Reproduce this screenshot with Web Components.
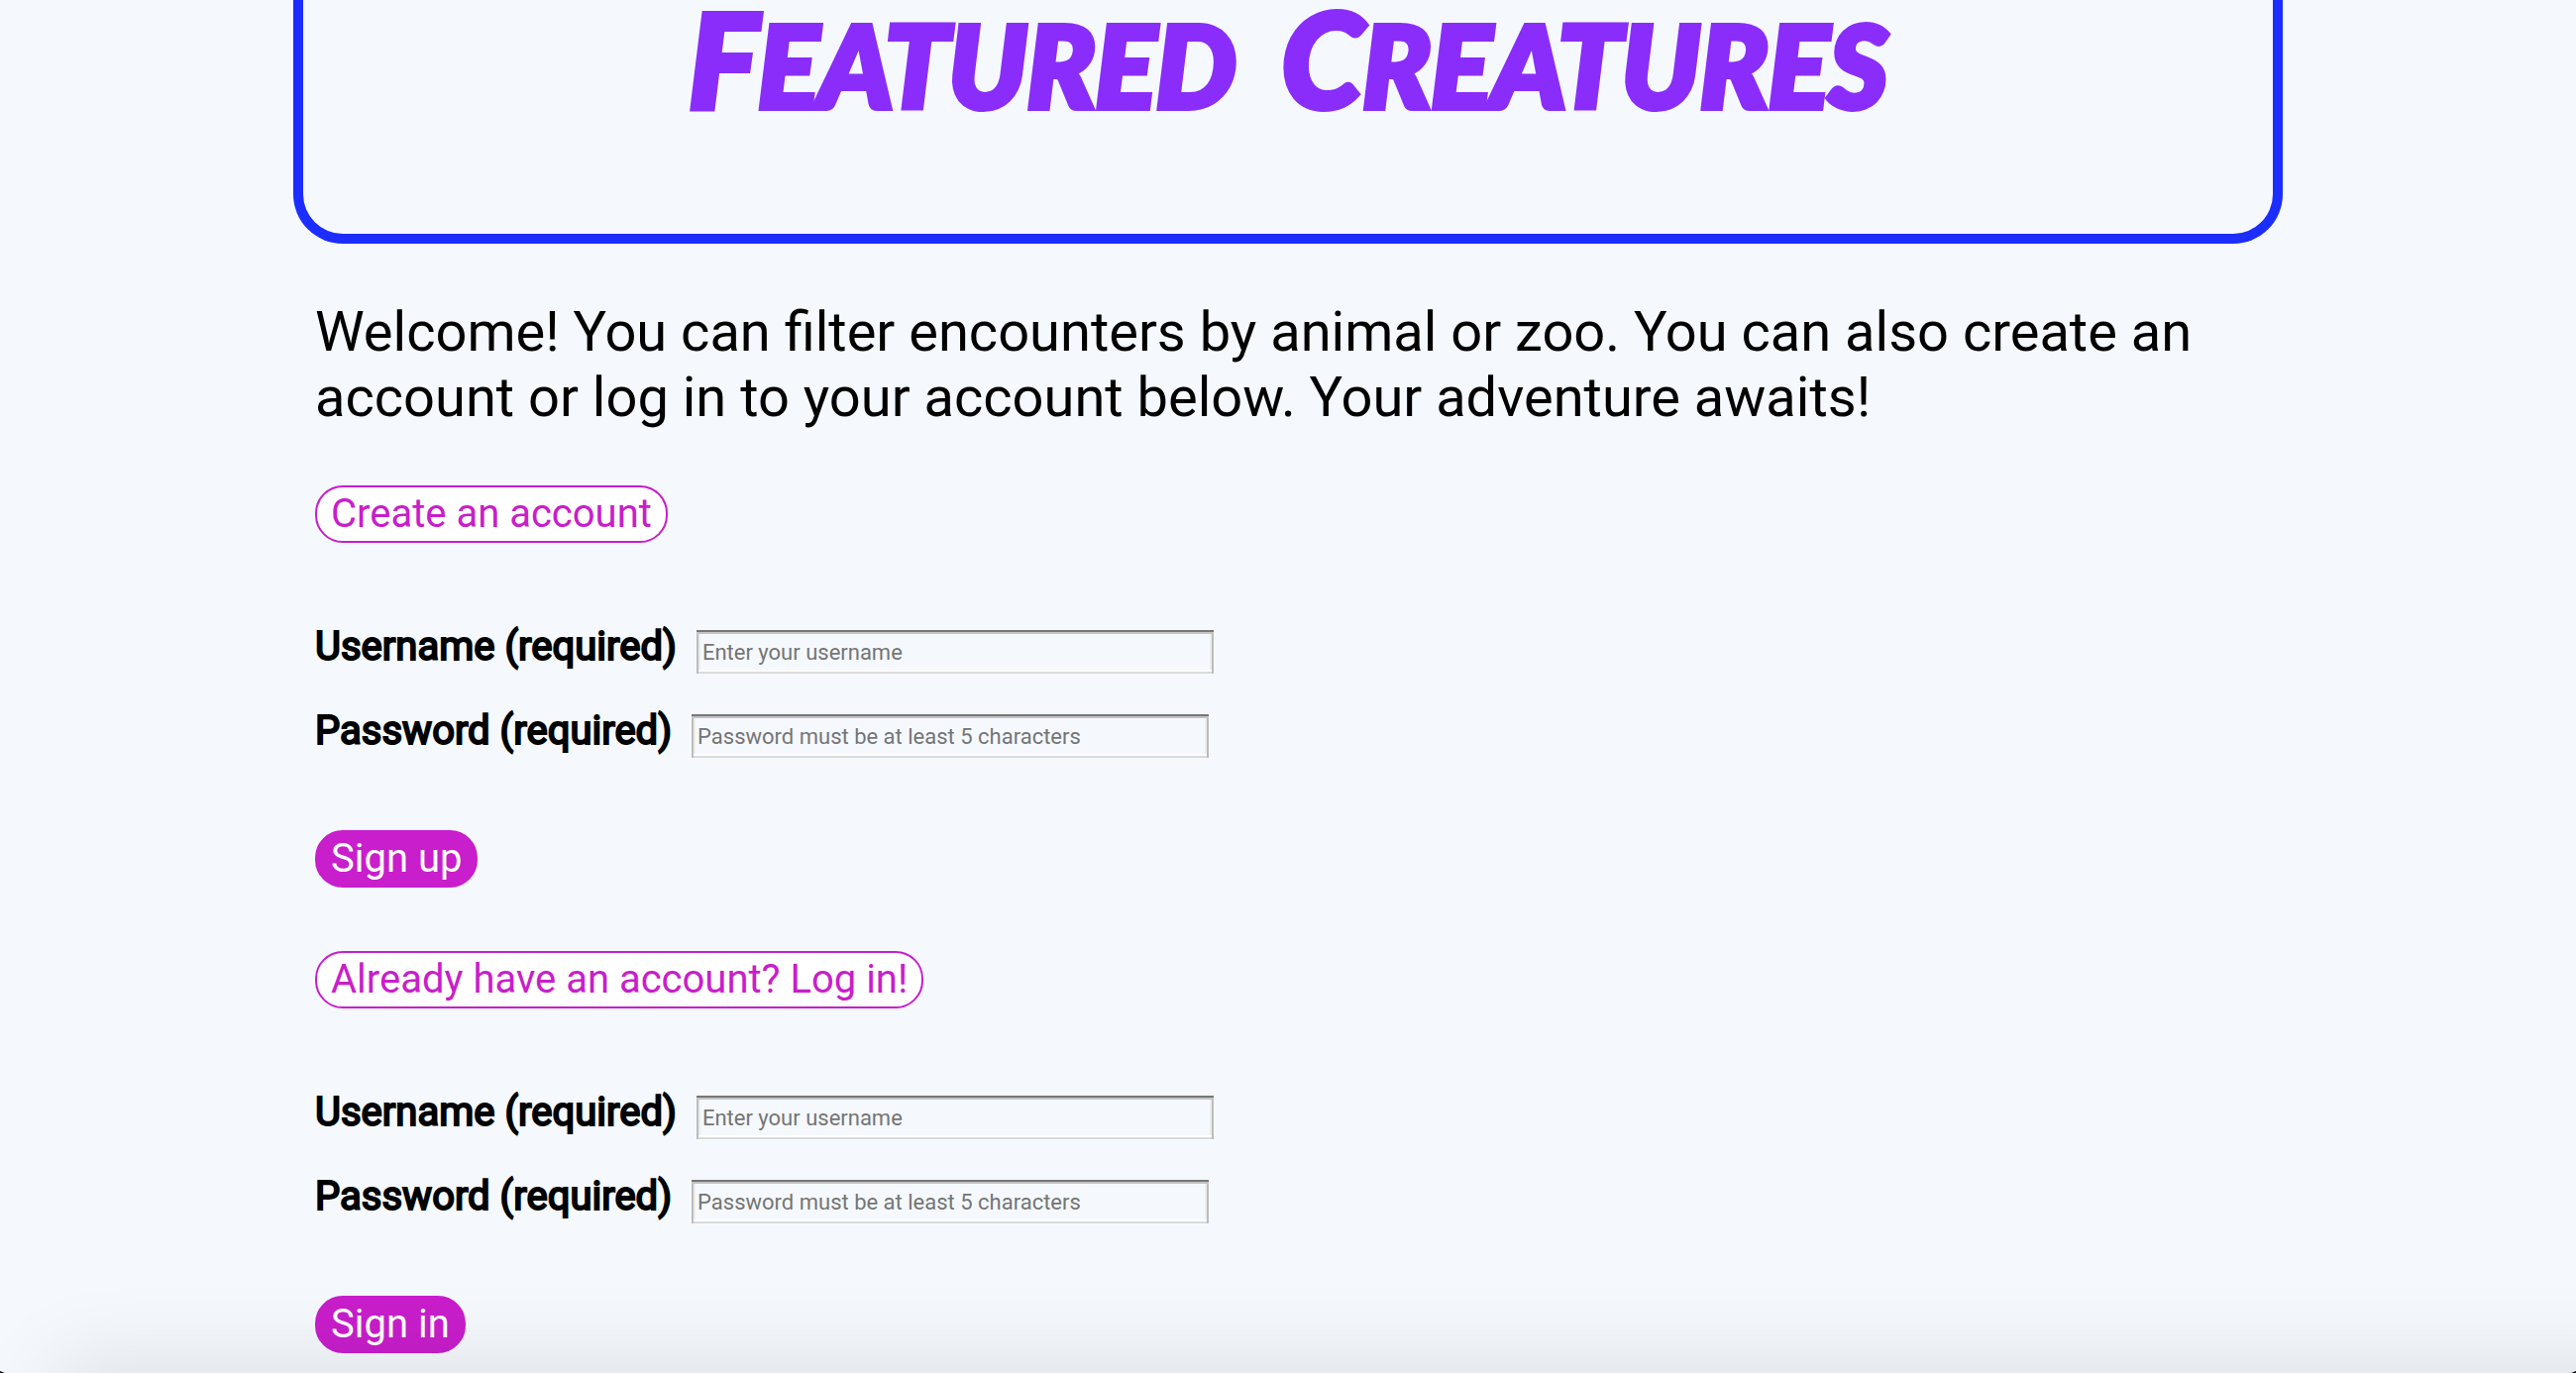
<!DOCTYPE html>
<html lang="en">
<head>
<meta charset="utf-8">
<title>Featured Creatures</title>
<style>
  body {
    margin: 0;
    min-height: 100vh;
    background: #f5f9fe;
    color: #000;
    font-family: Roboto, "Liberation Sans", sans-serif;
  }
  page-banner span::first-letter { font-size: 132px; }
</style>
</head>
<body>
<creature-page>
  <page-banner slot="banner"><span>Featured</span> <span>Creatures</span></page-banner>
  <welcome-text>Welcome! You can filter encounters by animal or zoo. You can also create an account or log in to your account below. Your adventure awaits!</welcome-text>
  <account-form heading="Create an account" action-label="Sign up"></account-form>
  <account-form heading="Already have an account? Log in!" action-label="Sign in"></account-form>
</creature-page>
<window-edge></window-edge>

<script>
  class ShadowElement extends HTMLElement {
    constructor() {
      super();
      this.attachShadow({ mode: "open" });
    }
    connectedCallback() {
      if (!this.shadowRoot.childNodes.length) this.shadowRoot.innerHTML = this.render();
    }
  }

  customElements.define("creature-page", class extends ShadowElement {
    render() {
      return `
        <style>
          :host { display: block; max-width: 2008px; margin: 0 auto; }
          main { display: flex; flex-direction: column; padding: 56px 22px 0; }
        </style>
        <slot name="banner"></slot>
        <main><slot></slot></main>`;
    }
  });

  customElements.define("page-banner", class extends ShadowElement {
    render() {
      return `
        <style>
          :host {
            display: block;
            border: 10px solid #1c2dff;
            border-top: 0;
            border-radius: 0 0 50px 50px;
            padding-bottom: 113px;
          }
          h1 {
            display: flex;
            flex-wrap: wrap;
            justify-content: center;
            column-gap: 46px;
            margin: 0;
            text-transform: uppercase;
            color: #8a2dfb;
            font: italic 900 114px/116px Lato, "Liberation Sans", sans-serif;
            -webkit-text-stroke: 6px #8a2dfb;
          }
          ::slotted(span) { display: block; }
        </style>
        <h1><slot></slot></h1>`;
    }
  });

  customElements.define("welcome-text", class extends ShadowElement {
    render() {
      return `
        <style>
          :host { display: block; }
          p { margin: 0 0 56px; font-size: 56px; line-height: 66px; }
        </style>
        <p><slot></slot></p>`;
    }
  });

  customElements.define("pill-button", class extends ShadowElement {
    render() {
      return `
        <style>
          :host { display: block; }
          button {
            display: block;
            margin: 0;
            padding: 4px 14px;
            border: 2px solid #c81ecb;
            border-radius: 28px;
            background: #fff;
            color: #c81ecb;
            font: 400 40px/46px Roboto, "Liberation Sans", sans-serif;
          }
          :host([filled]) button { background: #c81ecb; color: #fff; }
        </style>
        <button type="button"><slot></slot></button>`;
    }
  });

  customElements.define("form-field", class extends ShadowElement {
    render() {
      const type = this.getAttribute("type");
      return `
        <style>
          :host { display: flex; align-items: center; gap: 20px; height: 46px; }
          label {
            font-size: 40px;
            line-height: 46px;
            -webkit-text-stroke: 2px #000;
          }
          input {
            box-sizing: border-box;
            width: 522px;
            max-width: 100%;
            height: 44px;
            margin: 10px 0 0;
            padding: 0 6px;
            border: 0;
            border-radius: 0;
            background: transparent;
            box-shadow:
              inset 0 2px #777, inset 0 4px #c3c3c3,
              inset 2px 0 #bcbcbc, inset -2px 0 #bcbcbc,
              inset 0 -2px #dadada, inset 0 -4px #fff,
              inset 4px 0 #ededed, inset -4px 0 #ededed;
            font: 400 22px/26px Roboto, "Liberation Sans", sans-serif;
          }
          input::placeholder { color: #757575; opacity: 1; }
        </style>
        <label for="field">${this.getAttribute("label")}</label>
        <input id="field" type="${type}" placeholder="${this.getAttribute("hint")}" required>`;
    }
  });

  customElements.define("account-form", class extends ShadowElement {
    render() {
      return `
        <style>
          :host { display: block; }
          :host(:not(:last-of-type)) { margin-bottom: 64px; }
          form { display: flex; flex-direction: column; align-items: flex-start; }
          .fields { display: flex; flex-direction: column; gap: 39px; padding: 82px 0 77px; }
        </style>
        <form>
          <pill-button>${this.getAttribute("heading")}</pill-button>
          <div class="fields">
            <form-field type="text" label="Username (required)" hint="Enter your username"></form-field>
            <form-field type="password" label="Password (required)" hint="Password must be at least 5 characters"></form-field>
          </div>
          <pill-button filled>${this.getAttribute("action-label")}</pill-button>
        </form>`;
    }
  });

  customElements.define("window-edge", class extends ShadowElement {
    render() {
      return `
        <style>
          :host {
            position: fixed;
            inset: auto 0 0 0;
            height: 120px;
            overflow: hidden;
            pointer-events: none;
          }
          .shade {
            position: absolute;
            inset: 100% -80px -80px 64px;
            box-shadow: 0 0 90px 8px rgba(0, 0, 0, .11);
          }
          .corner { position: absolute; bottom: 0; width: 5px; height: 2px; background: #111; }
          .left { left: 0; clip-path: polygon(0 0, 100% 100%, 0 100%); }
          .right { right: 0; clip-path: polygon(100% 0, 100% 100%, 0 100%); }
        </style>
        <div class="shade"></div>
        <div class="corner left"></div>
        <div class="corner right"></div>`;
    }
  });
</script>
</body>
</html>
